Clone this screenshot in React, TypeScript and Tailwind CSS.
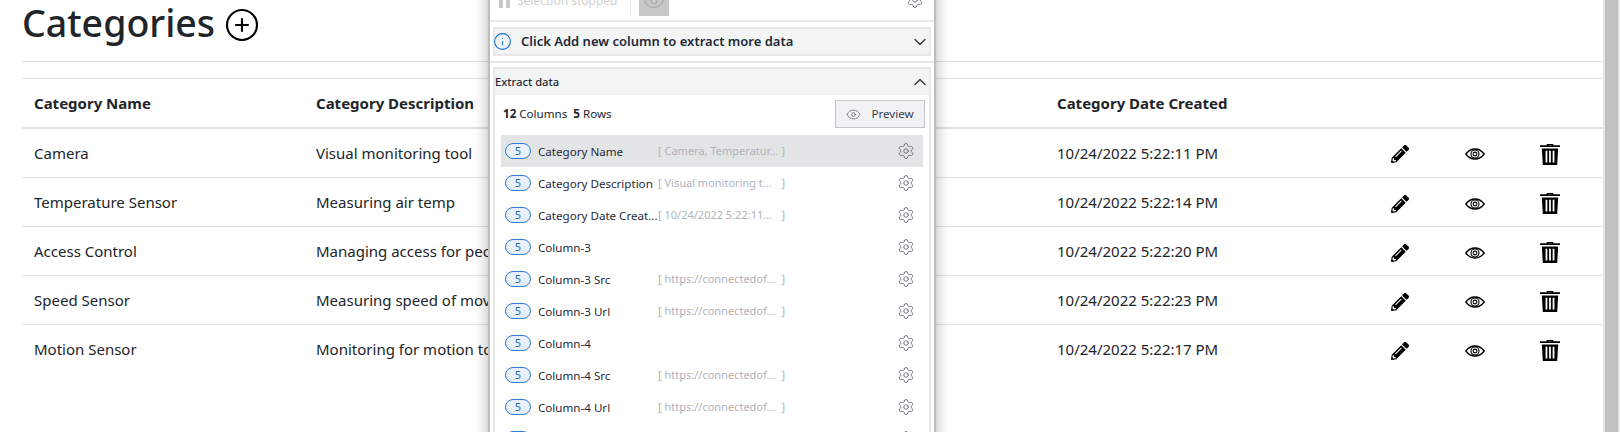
import { ChevronDown, ChevronUp, CirclePlus, Eye, Info, Settings } from 'lucide-react';
import { FaPencilAlt } from 'react-icons/fa';

const categories = [
  { name: 'Camera', description: 'Visual monitoring tool', date: '10/24/2022 5:22:11 PM' },
  { name: 'Temperature Sensor', description: 'Measuring air temp', date: '10/24/2022 5:22:14 PM' },
  { name: 'Access Control', description: 'Managing access for people', date: '10/24/2022 5:22:20 PM' },
  { name: 'Speed Sensor', description: 'Measuring speed of moving objects', date: '10/24/2022 5:22:23 PM' },
  { name: 'Motion Sensor', description: 'Monitoring for motion to alert', date: '10/24/2022 5:22:17 PM' },
];

const columns = [
  { name: 'Category Name', value: 'Camera, Temperatur...' },
  { name: 'Category Description', value: 'Visual monitoring t...' },
  { name: 'Category Date Creat...', value: '10/24/2022 5:22:11...' },
  { name: 'Column-3', value: '' },
  { name: 'Column-3 Src', value: 'https://connectedof...' },
  { name: 'Column-3 Url', value: 'https://connectedof...' },
  { name: 'Column-4', value: '' },
  { name: 'Column-4 Src', value: 'https://connectedof...' },
  { name: 'Column-4 Url', value: 'https://connectedof...' },
  { name: 'Column-5', value: '' },
];

function EyeIcon() {
  return (
    <svg width="20" height="20" viewBox="0 0 20 20" fill="none" stroke="black">
      <path d="M0.8 10C3.5 6.4 6.6 5 10 5s6.5 1.4 9.2 5c-2.7 3.6-5.8 5-9.2 5s-6.5-1.4-9.2-5z" strokeWidth="1.3" />
      <circle cx="10" cy="10" r="4" strokeWidth="1.1" />
      <circle cx="10" cy="10" r="1.9" strokeWidth="1.1" />
    </svg>
  );
}

function TrashIcon() {
  return (
    <svg width="20" height="21" viewBox="1 1 18 19" fill="black">
      <path d="M7 2.2V1h6v1.2h6v1.6H1V2.2h6zM8.2 2.2h3.6v-.3H8.2v.3z" fillRule="evenodd" />
      <path d="M2.6 5h14.8l-.9 15H3.5L2.6 5zM6 7.2v10.6h1.6V7.2H6zm3.2 0v10.6h1.6V7.2H9.2zm3.2 0v10.6H14V7.2h-1.6z" fillRule="evenodd" />
    </svg>
  );
}

export default function App() {
  return (
    <div className="relative flex h-[432px] overflow-hidden bg-white font-['Noto_Sans',sans-serif] text-[#212529]">
      {/* PAGE */}
      <div className="flex-1 pl-[22px]">
        <div className="h-[62px] border-b border-[#dee2e6]">
          <h1 className="flex h-[46px] items-center gap-[9px] text-[37.5px] leading-[46px] font-medium">
            Categories
            <CirclePlus size={36} strokeWidth={1.4} className="mt-1 text-black" />
          </h1>
        </div>
        <table className="mt-4 w-full table-fixed border-t border-[#dee2e6] text-[15px]">
          <thead>
            <tr className="h-[49px] border-b-2 border-[#dee2e6] text-left">
              <th className="w-[282px] px-3 font-bold">Category Name</th>
              <th className="w-[741px] px-3 font-bold">Category Description</th>
              <th className="w-[318px] px-3 font-bold">Category Date Created</th>
              <th className="w-[74px]" />
              <th className="w-[75px]" />
              <th className="w-[75px]" />
              <th />
            </tr>
          </thead>
          <tbody>
            {categories.map((c, i) => (
              <tr key={c.name} className={i === 0 ? 'h-[50px] border-b border-[#dee2e6]' : i < 4 ? 'h-[49px] border-b border-[#dee2e6]' : 'h-[49px]'}>
                <td className="px-3">{c.name}</td>
                <td className="px-3">{c.description}</td>
                <td className="px-3">{c.date}</td>
                <td>
                  <div className="flex justify-center pt-[3px]">
                    <FaPencilAlt size={18} className="text-black" />
                  </div>
                </td>
                <td>
                  <div className="flex justify-center pt-[3px]">
                    <EyeIcon />
                  </div>
                </td>
                <td>
                  <div className="flex justify-center pt-[3px]">
                    <TrashIcon />
                  </div>
                </td>
                <td />
              </tr>
            ))}
          </tbody>
        </table>
      </div>

      {/* SCROLLBAR */}
      <div className="w-[17px] border-x-2 border-[#e6e6e6] bg-[#c0c0c0]" />

      {/* EXTRACTOR PANEL */}
      <div className="absolute top-[-30px] left-[488px] w-[448px] border-x-2 border-[#bdbdbd] bg-white px-[3px] text-[11.6px] shadow-[0_0_14px_rgba(0,0,0,0.3)]">
        <div className="-mx-[3px] flex h-[52px] items-center border-b-2 border-[#e6e6e6] pt-[12px] pr-[10px] pl-[9px]">
          <div className="flex w-[131px] items-center gap-[7px] text-[12px] text-[#d0d0d0]">
            <div className="flex h-[14px] gap-[3px]">
              <div className="w-[4px] bg-[#c8c8c8]" />
              <div className="w-[4px] bg-[#c8c8c8]" />
            </div>
            Selection stopped
          </div>
          <div className="flex h-[30px] items-center border-l border-[#eeeeee] pl-2">
            <div className="flex h-[30px] w-[30px] items-center justify-center bg-[#c8c8c8]">
              <Eye size={22} strokeWidth={1.2} className="text-[#a8a8a8]" />
            </div>
          </div>
          <Settings size={18} strokeWidth={1.3} className="-mt-[3px] ml-auto text-[#6b7280]" />
        </div>

        <div className="mt-[5px] flex h-[29px] items-center border-2 border-[#e6e8e8] bg-[#f3f5f5]">
          <Info size={19} strokeWidth={1.4} className="-ml-[2px] text-[#1a73d9]" />
          <span className="ml-[9px] pt-[1px] text-[13px] font-semibold text-[#1f2937]">Click Add new column to extract more data</span>
          <ChevronDown size={20} strokeWidth={1.6} className="-mr-[1px] ml-auto text-[#333333]" />
        </div>

        <div className="-mx-[3px] mt-[5px] border-t-2 border-[#e6e6e6]" />

        <div className="mt-[4px] border-x-2 border-t-2 border-[#e6e8e8]">
          <div className="flex h-[26px] items-center justify-between bg-[#f3f5f5] text-[11.2px] font-medium text-[#1f2937]">
            Extract data
            <ChevronUp size={20} strokeWidth={1.6} className="-mr-[1px] text-[#333333]" />
          </div>
          <div className="flex h-[38px] items-center justify-between pr-[4px] pl-[8px]">
            <div>
              <b className="font-bold">12</b> Columns <b className="ml-[3px] font-bold">5</b> Rows
            </div>
            <div className="flex h-[28px] w-[90px] items-center justify-center gap-[10px] border border-[#c4c6c9] bg-[#f1f2f3] text-[#374151]">
              <Eye size={15} strokeWidth={1.4} className="text-[#6b7280]" />
              Preview
            </div>
          </div>
          <div className="mx-[6px] mt-[2px]">
            {columns.map((col, i) => (
              <div key={col.name} className={i === 0 ? 'flex h-[32px] items-center bg-[#e3e4e6] pl-1' : 'flex h-[32px] items-center pl-1'}>
                <div className="flex h-[16px] w-[26px] items-center justify-center rounded-full border border-[#2b7fd8] bg-[#e8f0fa] text-[11px] text-[#2b6cb0]">5</div>
                <div className="ml-[7px] w-[120px] shrink-0 pt-[1px] whitespace-nowrap text-[#1f2937]">{col.name}</div>
                {col.value && (
                  <div className="flex w-[127px] justify-between pt-[1px] whitespace-nowrap text-[11px] text-[#b0b3b8]">
                    <span>[ {col.value}</span>
                    <span>]</span>
                  </div>
                )}
                <Settings size={18} strokeWidth={1.3} className="mr-[8px] ml-auto text-[#6b7280]" />
              </div>
            ))}
          </div>
        </div>
      </div>
    </div>
  );
}
